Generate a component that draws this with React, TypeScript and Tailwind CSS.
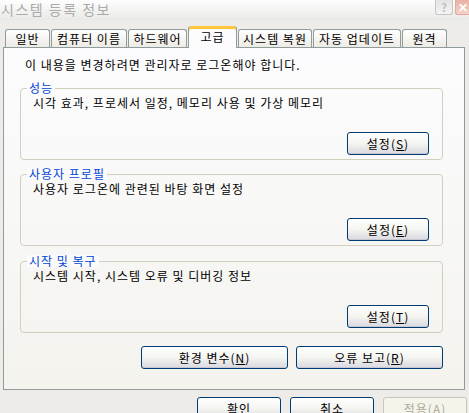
import React from "react";

const tabs = [
  { label: "일반", w: "w-[45px]" },
  { label: "컴퓨터 이름", w: "w-[76px]" },
  { label: "하드웨어", w: "w-[59px]" },
  { label: "고급", w: "w-[49px]", active: true },
  { label: "시스템 복원", w: "w-[74px]" },
  { label: "자동 업데이트", w: "w-[88px]" },
  { label: "원격", w: "w-[45px]" },
];

const XpButton = ({ children, className = "" }: { children: React.ReactNode; className?: string }) => (
  <button
    className={`h-[23px] rounded-[3px] border border-[#003C74] bg-gradient-to-b from-white via-[#F4F4F0] to-[#D9D9E0] text-[12px] leading-none tracking-[1px] text-black shadow-[inset_0_-1px_0_#C8C8D4] ${className}`}
  >
    {children}
  </button>
);

const GroupBox = ({
  title,
  text,
  mnemonic,
  className = "",
}: {
  title: string;
  text: string;
  mnemonic: string;
  className?: string;
}) => (
  <div className={`relative mx-[16px] w-[423px] rounded-[4px] border border-[#D0D0BF] pt-[7px] pr-[13px] pb-[4px] pl-[12px] ${className}`}>
    <span className="absolute -top-[7px] left-[6px] bg-[#FBFBFC] px-[2px] leading-[12px] text-[#0046D5]">{title}</span>
    <p className="leading-[14px]">{text}</p>
    <div className="mt-[22px] flex justify-end">
      <XpButton className="w-[82px]">
        설정(<u>{mnemonic}</u>)
      </XpButton>
    </div>
  </div>
);

export default function App() {
  return (
    <div className="relative h-[413px] w-[469px] overflow-hidden bg-[#EDECE8] font-['Noto_Sans_CJK_KR',sans-serif] text-[12px] tracking-[1px] text-black">
      {/* title bar (inactive) */}
      <div className="flex h-[20px] items-start bg-gradient-to-b from-[#FEFEFE] to-[#E9E9E6]">
        <span className="mt-[1px] pl-[1px] text-[14px] leading-[16px] tracking-[1.5px] text-[#ABABAB]">시스템 등록 정보</span>
        <div className="ml-auto flex gap-[2px] tracking-normal">
          <div className="flex h-[15px] w-[18px] items-center justify-center rounded-b-[3px] border border-t-0 border-[#C6C6C6] bg-gradient-to-b from-[#E4E4E4] to-[#F4F4F4] text-[11px] font-bold leading-none text-[#C0C0C0]">
            ?
          </div>
          <div className="flex h-[15px] w-[14px] items-center justify-end rounded-bl-[3px] border border-t-0 border-r-0 border-[#E2A89C] bg-gradient-to-b from-[#E8B0A4] to-[#F4D2CA] pr-[1px] text-[12px] font-bold leading-none text-white">
            ✕
          </div>
        </div>
      </div>

      {/* tabs */}
      <div className="flex h-[27px] items-end gap-[1px] pl-[5px]">
        {tabs.map((t) =>
          t.active ? (
            <div
              key={t.label}
              className={`relative z-10 -mb-[1px] flex h-[22px] ${t.w} items-start justify-center rounded-t-[3px] border border-b-0 border-t-0 border-[#919B9C] bg-[#FCFCFE] shadow-[inset_0_3px_0_#FFC83C]`}
            >
              <span className="mt-[4px] leading-[14px]">{t.label}</span>
            </div>
          ) : (
            <div
              key={t.label}
              className={`flex h-[18px] ${t.w} items-center justify-center rounded-t-[3px] border border-b-0 border-[#919B9C] bg-gradient-to-b from-white to-[#ECEBE5]`}
            >
              <span className="leading-[14px]">{t.label}</span>
            </div>
          )
        )}
      </div>

      {/* panel */}
      <div className="mx-[3px] h-[343px] w-[462px] border border-[#919B9C] bg-gradient-to-b from-[#FCFCFE] to-[#F4F3EE] pt-[10px]">
        <p className="pl-[21px] leading-[14px]">이 내용을 변경하려면 관리자로 로그온해야 합니다.</p>

        <GroupBox className="mt-[16px]" title="성능" text="시각 효과, 프로세서 일정, 메모리 사용 및 가상 메모리" mnemonic="S" />
        <GroupBox className="mt-[14px]" title="사용자 프로필" text="사용자 로그온에 관련된 바탕 화면 설정" mnemonic="E" />
        <GroupBox className="mt-[15px]" title="시작 및 복구" text="시스템 시작, 시스템 오류 및 디버깅 정보" mnemonic="T" />

        <div className="mt-[13px] flex w-[439px] justify-end gap-[8px]">
          <XpButton className="w-[147px]">
            환경 변수(<u>N</u>)
          </XpButton>
          <XpButton className="w-[147px]">
            오류 보고(<u>R</u>)
          </XpButton>
        </div>
      </div>

      {/* dialog buttons */}
      <div className="mt-[7px] flex gap-[9px] pl-[197px]">
        <XpButton className="w-[84px]">확인</XpButton>
        <XpButton className="w-[84px]">취소</XpButton>
        <button className="h-[23px] w-[84px] rounded-[3px] border border-[#C9C7BA] bg-[#F5F4EA] text-[12px] leading-none tracking-[1px] text-[#ACA899]">
          적용(A)
        </button>
      </div>
    </div>
  );
}
